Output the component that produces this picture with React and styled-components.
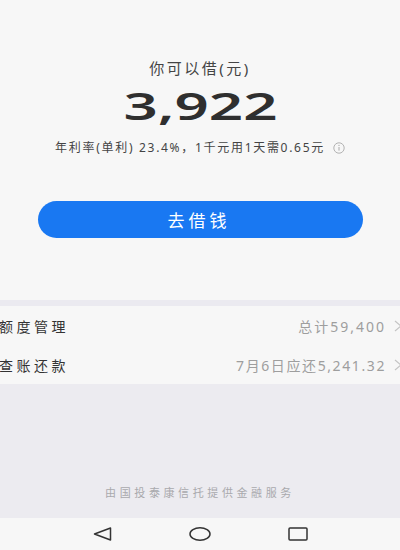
import React from 'react';
import styled, { createGlobalStyle } from 'styled-components';

const GlobalStyle = createGlobalStyle`
  html, body {
    margin: 0;
    padding: 0;
    background: #f7f7f7;
  }
  body {
    font-family: 'Noto Sans', 'Noto Sans CJK SC', sans-serif;
    overflow: hidden;
  }
`;

const Page = styled.div`
  width: 400px;
  height: 550px;
  display: flex;
  flex-direction: column;
  background: #ecebf0;
  overflow: hidden;
`;

const Hero = styled.section`
  background: #f7f7f7;
  display: flex;
  flex-direction: column;
  align-items: center;
  padding: 58px 0 62px;
  border-bottom: 6px solid #ebeaf0;
`;

const Label = styled.div`
  font-size: 15px;
  line-height: 20px;
  letter-spacing: 2.5px;
  color: #444;
`;

const Amount = styled.div`
  margin-top: 8px;
  font-family: 'Noto Sans', sans-serif;
  font-weight: 600;
  font-size: 37px;
  line-height: 40px;
  color: #2f2f2f;
  transform: scaleX(1.62);
`;

const Rate = styled.div`
  margin-top: 14px;
  display: flex;
  align-items: center;
  gap: 8px;
  font-size: 12px;
  line-height: 16px;
  letter-spacing: 1.7px;
  color: #444;
`;

const Button = styled.button`
  margin-top: 45px;
  width: 325px;
  height: 37px;
  border: none;
  border-radius: 19px;
  background: #1978f2;
  color: #fff;
  font-family: 'Noto Sans CJK SC', sans-serif;
  font-size: 17px;
  letter-spacing: 4px;
  padding-left: 4px;
`;

const List = styled.div`
  background: #f7f7f7;
  display: flex;
  flex-direction: column;
`;

const Row = styled.div`
  height: 39px;
  display: flex;
  align-items: center;
  justify-content: space-between;
  margin-left: -1px;
  margin-right: -2px;
`;

const RowLabel = styled.span`
  font-size: 14px;
  letter-spacing: 3.5px;
  color: #333;
`;

const RowValue = styled.span`
  display: flex;
  align-items: center;
  gap: 8px;
  font-size: 14px;
  letter-spacing: ${props => props.spacing || 2}px;
  color: #9e9e9e;
`;

const Footer = styled.div`
  flex: 1;
  display: flex;
  flex-direction: column;
  justify-content: flex-end;
  align-items: center;
  padding-bottom: 18px;
`;

const FooterText = styled.div`
  font-size: 11px;
  letter-spacing: 3.6px;
  color: #a9a9ad;
`;

const NavBar = styled.nav`
  height: 32px;
  background: #f7f7f7;
  display: flex;
  justify-content: center;
  align-items: center;
`;

const NavCell = styled.div`
  width: 98px;
  display: flex;
  justify-content: center;
  align-items: center;
`;

const InfoIcon = () => (
  <svg width="12" height="12" viewBox="0 0 12 12">
    <circle cx="6" cy="6" r="5.2" fill="none" stroke="#aaa" strokeWidth="0.9" />
    <line x1="6" y1="5" x2="6" y2="8.6" stroke="#aaa" strokeWidth="1" />
    <circle cx="6" cy="3.4" r="0.6" fill="#aaa" />
  </svg>
);

const Chevron = () => (
  <svg width="8" height="12" viewBox="0 0 8 12">
    <polyline points="1,1 7,6 1,11" fill="none" stroke="#c4c4c4" strokeWidth="1.2" />
  </svg>
);

const App = () => {
  return (
    <Page>
      <GlobalStyle />
      <Hero>
        <Label>你可以借(元)</Label>
        <Amount>3,922</Amount>
        <Rate>
          <span>年利率(单利) 23.4%，1千元用1天需0.65元</span>
          <InfoIcon />
        </Rate>
        <Button>去借钱</Button>
      </Hero>

      <List>
        <Row>
          <RowLabel>额度管理</RowLabel>
          <RowValue>总计59,400<Chevron /></RowValue>
        </Row>
        <Row>
          <RowLabel>查账还款</RowLabel>
          <RowValue spacing={1.6}>7月6日应还5,241.32<Chevron /></RowValue>
        </Row>
      </List>

      <Footer>
        <FooterText>由国投泰康信托提供金融服务</FooterText>
      </Footer>

      <NavBar>
        <NavCell>
          <svg width="19" height="14" viewBox="0 0 19 14">
            <polygon points="1.5,7 17.5,1 17.5,13" fill="none" stroke="#333" strokeWidth="1.5" strokeLinejoin="round" />
          </svg>
        </NavCell>
        <NavCell>
          <svg width="22" height="14" viewBox="0 0 22 14">
            <ellipse cx="11" cy="7" rx="10" ry="6.2" fill="none" stroke="#333" strokeWidth="1.5" />
          </svg>
        </NavCell>
        <NavCell>
          <svg width="20" height="14" viewBox="0 0 20 14">
            <rect x="1" y="1" width="18" height="12" rx="1" fill="none" stroke="#333" strokeWidth="1.5" />
          </svg>
        </NavCell>
      </NavBar>
    </Page>
  );
};

export default App;
